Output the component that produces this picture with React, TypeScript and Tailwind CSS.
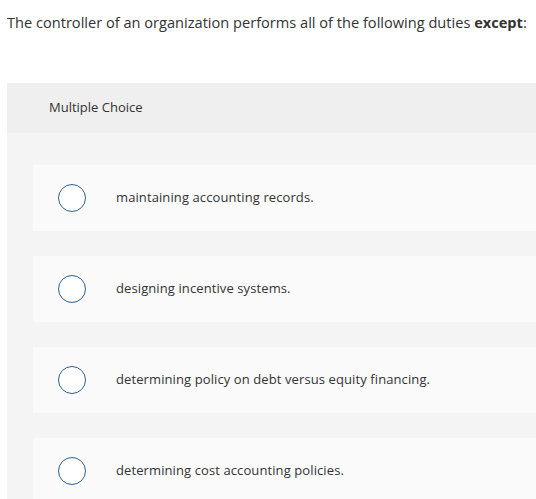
const options = [
  'maintaining accounting records.',
  'designing incentive systems.',
  'determining policy on debt versus equity financing.',
  'determining cost accounting policies.',
]

export default function App() {
  return (
    <div className="h-[499px] w-[536px] overflow-hidden bg-white font-['Open_Sans',sans-serif] text-[#333]">
      {/* Question */}
      <p className="pl-[7px] pt-[12px] text-[14.6px] leading-[20px] whitespace-nowrap">
        The controller of an organization performs all of the following duties <b>except</b>:
      </p>

      <div className="ml-[7px] mt-[51px] w-[560px]">
        {/* Header */}
        <div className="flex h-[50px] items-center bg-[#efefef] pl-[42px] text-[13px]">Multiple Choice</div>

        {/* Choices */}
        <div className="flex flex-col gap-[25px] bg-[#f4f4f4] pl-[26px] pt-[32px] pb-[20px]">
          {options.map((opt) => (
            <div key={opt} className="flex h-[66px] items-center bg-[#fafafa]">
              <span className="ml-[25px] h-[28px] w-[28px] rounded-full border-[1.5px] border-[#2d5f8e] bg-white" />
              <span className="ml-[30px] text-[13px] tracking-[0.1px]">{opt}</span>
            </div>
          ))}
        </div>
      </div>
    </div>
  )
}
